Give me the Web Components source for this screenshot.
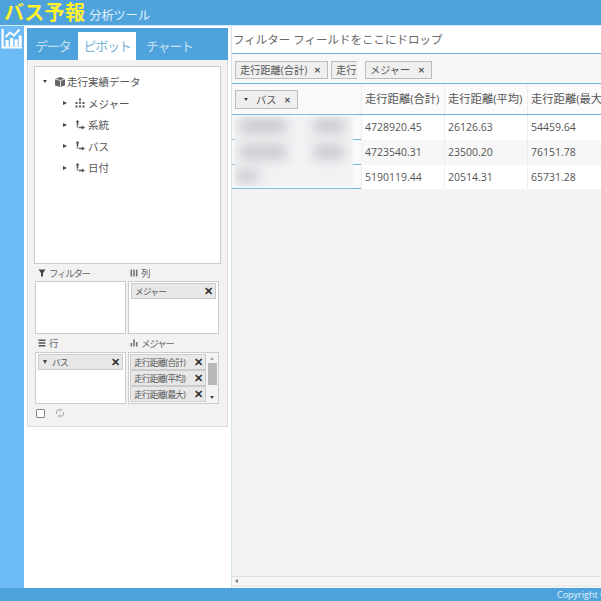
<!DOCTYPE html>
<html>
<head>
<meta charset="utf-8">
<style>
html, body { margin: 0; height: 100%; overflow: hidden; }
body { font-family: "Open Sans", "Noto Sans CJK JP", sans-serif; }
</style>
</head>
<body>
<app-shell></app-shell>
<script>
const FONT = '"Open Sans", "Noto Sans CJK JP", sans-serif';

class AppShell extends HTMLElement {
    constructor() {
        super();
        this.attachShadow({ mode: 'open' }).innerHTML = `
<style>
:host { display: grid; grid-template-rows: 25px 1fr 13px; width: 601px; height: 601px; overflow: hidden; font-family: ${FONT}; color: #555; }
.body { display: grid; grid-template-columns: 24px 207px 1fr; min-height: 0; border-top: 1px solid #d5ebf8; }
.rail { background: #6cbaf6; padding: 2px 0 0 1px; }
.side { background: #fff; padding: 2px 3px 0 3px; }
</style>
<app-header></app-header>
<div class="body">
  <div class="rail">
    <svg width="21" height="21" viewBox="0 0 21 21" fill="#fff">
      <path d="M0.500 1h2.200v17.500H21V20.500H0.500z"/>
      <path d="M4.500 12h3.200v6.500H4.500zM9 10h3.200v8.500H9zM13.500 11.500h3.200v7h-3.200zM17.700 7.500h3v11h-3z"/>
      <path d="M4.500 9l4.500-4.500 4 3 5.500-6" fill="none" stroke="#fff" stroke-width="2"/>
    </svg>
  </div>
  <div class="side"><pivot-panel></pivot-panel></div>
  <pivot-view></pivot-view>
</div>
<app-footer></app-footer>`;
    }
}

class AppHeader extends HTMLElement {
    constructor() {
        super();
        this.attachShadow({ mode: 'open' }).innerHTML = `
<style>
:host { display: flex; align-items: baseline; background: #4fa3dc; padding-left: 4px; height: 25px; overflow: hidden; }
b { font-size: 20px; line-height: 25px; letter-spacing: 0.300px; color: #fff12e; font-weight: 700; }
span { font-size: 12.200px; color: #e6f3fb; margin-left: 4px; }
</style>
<b>バス予報</b><span>分析ツール</span>`;
    }
}

class AppFooter extends HTMLElement {
    constructor() {
        super();
        this.attachShadow({ mode: 'open' }).innerHTML = `
<style>
:host { display: flex; justify-content: flex-end; background: #4fa3dc; color: #e6f3fb; font-size: 9px; line-height: 13px; overflow: hidden; }
span { width: 44px; white-space: nowrap; }
</style>
<span>Copyright ©</span>`;
    }
}

class PivotPanel extends HTMLElement {
    constructor() {
        super();
        this.attachShadow({ mode: 'open' }).innerHTML = `
<style>
:host { display: block; width: 201px; height: 399px; background: #f2f2f2; border: 1px solid #ddd; border-top: 0; box-sizing: border-box; font-size: 12px; }
.tabs { display: flex; height: 32px; margin: 0 -1px; background: #4fa3dc; padding-top: 4px; box-sizing: border-box; color: #c4e0f3; font-size: 13px; letter-spacing: -1.300px; }
.tabs span { line-height: 28px; white-space: nowrap; }
.tabs span:first-child { width: 43px; padding-left: 8px; }
.tabs .on { width: 58px; text-align: center; background: #fff; color: #7ab3dc; }
.tabs span:last-child { padding-left: 10px; }
.tree { margin: 6px 6px 0; height: 198px; background: #fff; border: 1px solid #ccc; box-sizing: border-box; padding: 4px 0 0 8px; }
.zones { display: grid; grid-template-columns: 91px 91px; grid-template-rows: 70px 70px; column-gap: 2px; margin: 0 0 0 7px; }
.tools { display: flex; align-items: center; gap: 10px; margin: 4px 0 0 8px; }
.check { width: 9px; height: 9px; background: #fff; border: 1px solid #888; border-radius: 1px; box-sizing: border-box; }
</style>
<div class="tabs"><span>データ</span><span class="on">ピボット</span><span>チャート</span></div>
<div class="tree">
  <tree-node open icon="cube">走行実績データ</tree-node>
  <tree-node indent icon="measure">メジャー</tree-node>
  <tree-node indent icon="dim">系統</tree-node>
  <tree-node indent icon="dim">バス</tree-node>
  <tree-node indent icon="dim">日付</tree-node>
</div>
<div class="zones">
  <drop-zone label="フィルター" icon="filter"></drop-zone>
  <drop-zone label="列" icon="cols"><zone-chip>メジャー</zone-chip></drop-zone>
  <drop-zone label="行" icon="rows" lower><zone-chip caret>バス</zone-chip></drop-zone>
  <drop-zone label="メジャー" icon="bars" lower scroll>
    <zone-chip>走行距離(合計)</zone-chip>
    <zone-chip>走行距離(平均)</zone-chip>
    <zone-chip>走行距離(最大)</zone-chip>
  </drop-zone>
</div>
<div class="tools">
  <span class="check"></span>
  <svg width="10" height="10" viewBox="0 0 10 10" fill="none" stroke="#aaa" stroke-width="1">
    <path d="M1.500 6V3.500A1.500 1.500 0 0 1 3 2h3M5 0.500L6.500 2 5 3.500"/>
    <path d="M8.500 4v2.500A1.500 1.500 0 0 1 7 8H4M5 6.500L3.500 8 5 9.500"/>
  </svg>
</div>`;
    }
}

const TREE_ICONS = {
    cube: '<path d="M0 2l5-2 5 2v6.500l-5 1.500-5-1.500z" fill="#666"/><path d="M5.500 3.500v6.500M0 2l5.500 1.500L10 2" stroke="#fff" stroke-width="0.800" fill="none"/>',
    measure: '<path d="M4 0.500h2v2H4zM0.500 4h2v2h-2zM4 3.800h2v2H4zM7.500 4h2v2h-2zM0.500 7.500h2v2h-2zM4 7.500h2v2H4zM7.500 7.500h2v2h-2z" fill="#555"/>',
    dim: '<path d="M2.500 0L4.500 2.200H3.300v3.300H1.700V2.200H0.500zM1.700 6.300h1.600V7.500H1.700zM4 6.800h3V5.500L10 7.500 7 9.500V8.200H4z" fill="#555"/>'
};

class TreeNode extends HTMLElement {
    constructor() {
        super();
        this.attachShadow({ mode: 'open' });
    }
    connectedCallback() {
        const open = this.hasAttribute('open');
        const indent = this.hasAttribute('indent');
        this.shadowRoot.innerHTML = `
<style>
:host { display: flex; align-items: center; height: 21.500px; padding-left: ${indent ? 20 : 0}px; font-size: 10.500px; color: #555; }
.arrow { width: 0; height: 0; margin-right: 8px; ${open
    ? 'border-left: 2.500px solid transparent; border-right: 2.500px solid transparent; border-top: 3px solid #444;'
    : 'border-top: 2.500px solid transparent; border-bottom: 2.500px solid transparent; border-left: 4px solid #444;'} }
svg { flex: none; margin-right: ${indent ? 3 : 2}px; }
</style>
<span class="arrow"></span>
<svg width="10" height="10" viewBox="0 0 10 10">${TREE_ICONS[this.getAttribute('icon')]}</svg>
<slot></slot>`;
    }
}

const ZONE_ICONS = {
    filter: '<path d="M0.500 1.500h7L5 5v3.500H3V5z" fill="#444"/>',
    cols: '<path d="M0.500 1.500h1.600v7H0.500zM3.200 1.500h1.600v7H3.200zM5.900 1.500h1.600v7H5.900z" fill="#777"/>',
    rows: '<path d="M0.500 1.500h7v1.400h-7zM0.500 4.300h7v1.400h-7zM0.500 7.100h7v1.400h-7z" fill="#555"/>',
    bars: '<path d="M0.500 5h1.600v3.500H0.500zM3.200 1.500h1.600v7H3.200zM5.900 4h1.600v4.500H5.900z" fill="#777"/>'
};

class DropZone extends HTMLElement {
    constructor() {
        super();
        this.attachShadow({ mode: 'open' });
    }
    connectedCallback() {
        const lower = this.hasAttribute('lower');
        const scroll = this.hasAttribute('scroll');
        this.shadowRoot.innerHTML = `
<style>
:host { display: block; font-size: 9.500px; color: #666; letter-spacing: -1.300px; }
.label { display: flex; align-items: center; gap: 3px; height: ${lower ? 18 : 17}px; padding-left: ${scroll || this.getAttribute('icon') === 'cols' ? 2 : 3}px; }
.box { position: relative; height: ${lower ? 52 : 53}px; background: #fff; border: 1px solid #ccc; box-sizing: border-box; padding: 0 2px; overflow: hidden; letter-spacing: 0; }
.scroll { padding: 0 0 0 1px; }
.bar { position: absolute; right: 0; top: 0; bottom: 0; width: 12px; background: #f4f4f4; }
.bar i { position: absolute; left: 2px; top: 10px; width: 9px; height: 22px; background: #b9b9b9; }
.bar u { position: absolute; left: 4px; width: 0; height: 0; border-left: 2.500px solid transparent; border-right: 2.500px solid transparent; }
.bar .up { top: 4px; border-bottom: 3px solid #aaa; }
.bar .down { bottom: 4px; border-top: 3px solid #444; }
.list { padding-top: 1px; }
.scroll .list { margin-right: 12px; }
.scroll .list::after { content: ""; display: block; height: 4px; margin-top: 1px; background: #e4e4e4; }
svg { flex: none; }
</style>
<div class="label"><svg width="8" height="10" viewBox="0 0 8 10">${ZONE_ICONS[this.getAttribute('icon')]}</svg>${this.getAttribute('label')}</div>
<div class="box ${scroll ? 'scroll' : ''}"><div class="list"><slot></slot></div>${scroll ? '<div class="bar"><u class="up"></u><i></i><u class="down"></u></div>' : ''}</div>`;
    }
}

class ZoneChip extends HTMLElement {
    constructor() {
        super();
        this.attachShadow({ mode: 'open' });
    }
    connectedCallback() {
        const caret = this.hasAttribute('caret');
        this.shadowRoot.innerHTML = `
<style>
:host { display: flex; align-items: center; height: 16px; background: #e8e8e8; border: 1px solid #ccc; box-sizing: border-box; padding: 0 2px 0 3px; font-size: 8.600px; letter-spacing: -0.700px; color: #555; }
.c { width: 0; height: 0; margin: 0 5px 0 1px; border-left: 2.500px solid transparent; border-right: 2.500px solid transparent; border-top: 4px solid #444; }
span { flex: 1; white-space: nowrap; }
b { font-size: 11px; line-height: 12px; letter-spacing: 0; color: #333; font-family: "Liberation Sans", sans-serif; }
</style>
${caret ? '<i class="c"></i>' : ''}<span><slot></slot></span><b>✕</b>`;
    }
}

class FieldTag extends HTMLElement {
    constructor() {
        super();
        this.attachShadow({ mode: 'open' });
    }
    connectedCallback() {
        const caret = this.hasAttribute('caret');
        const cut = this.hasAttribute('cut');
        this.shadowRoot.innerHTML = `
<style>
:host { display: inline-flex; align-items: center; flex: none; height: 18px; background: #efefef; border: 1px solid #bbb; box-sizing: border-box; padding: 0 6px 0 4px; font-size: 10.200px; color: #555; white-space: nowrap; overflow: hidden; ${cut ? 'border-right: 0; padding-right: 0;' : ''} }
.c { width: 0; height: 0; margin: 0 8px 0 4px; border-left: 2px solid transparent; border-right: 2px solid transparent; border-top: 3px solid #444; }
b { font-size: 7.500px; margin-left: auto; color: #555; }
</style>
${caret ? '<i class="c"></i>' : ''}<slot></slot>${cut ? '' : '<b>✕</b>'}`;
    }
}

class PivotView extends HTMLElement {
    constructor() {
        super();
        this.attachShadow({ mode: 'open' }).innerHTML = `
<style>
:host { display: flex; flex-direction: column; background: #f3f3f3; border-left: 1px solid #d6e4ee; min-width: 0; overflow: hidden; font-size: 10.500px; color: #555; }
.filter { height: 27px; background: #fff; border-bottom: 1px solid #6fb2de; padding-left: 1px; font-size: 11.500px; line-height: 27px; color: #666; }
.tags { display: flex; height: 27px; padding: 2px 0 0 3px; align-items: center; background: #f7f7f7; border-bottom: 1px solid #6fb2de; }
.tags .gap { width: 8px; flex: none; }
.head { display: flex; height: 30px; border-bottom: 1px solid #6fb2de; font-size: 11.300px; }
.corner { width: 129px; flex: none; background: #fafafa; padding: 5px 0 0 3px; box-sizing: border-box; }
.rows { position: relative; }
.row { display: flex; height: 25px; line-height: 25px; background: #fff; }
.row.alt { background: #f7f7f7; }
.row.last { height: 24px; line-height: 24px; }
.name { width: 129px; flex: none; box-sizing: border-box; background: #fafafa; border-bottom: 1px solid #6fb2de; }
.cell { width: 83px; flex: none; box-sizing: border-box; padding-left: 3px; border-left: 1px solid #eee; white-space: nowrap; }
.head .cell { background: #fbfbfb; line-height: 30px; }
.fill { flex: 1; }
.blur { position: absolute; left: 2px; top: 1px; width: 119px; height: 71px; background: #f1f2f4; filter: blur(1.500px); overflow: hidden; }
.blur i { position: absolute; background: #c6c8cb; filter: blur(6px); }
.hscroll { height: 10px; flex: none; box-sizing: border-box; margin-bottom: 2px; background: #f6f6f6; border-top: 1px solid #e0e0e0; border-bottom: 1px solid #e8e8e8; position: relative; }
.hscroll u { position: absolute; left: 3px; top: 2px; width: 0; height: 0; border-top: 2px solid transparent; border-bottom: 2px solid transparent; border-right: 3px solid #777; }
</style>
<div class="filter">フィルター フィールドをここにドロップ</div>
<div class="tags">
  <field-tag style="width:93px">走行距離(合計)</field-tag>
  <field-tag cut style="width:26px;margin-left:3px">走行距</field-tag>
  <span class="gap"></span>
  <field-tag style="width:67px">メジャー</field-tag>
</div>
<div class="head">
  <div class="corner"><field-tag caret style="width:63px;height:19px">バス</field-tag></div>
  <div class="cell">走行距離(合計)</div><div class="cell">走行距離(平均)</div><div class="cell">走行距離(最大)</div>
</div>
<div class="rows">
  <div class="row">
    <div class="name"></div>
    <div class="cell">4728920.45</div><div class="cell">26126.63</div><div class="cell">54459.64</div><div class="fill"></div>
  </div>
  <div class="row alt">
    <div class="name"></div>
    <div class="cell">4723540.31</div><div class="cell">23500.20</div><div class="cell">76151.78</div><div class="fill"></div>
  </div>
  <div class="row last">
    <div class="name"></div>
    <div class="cell">5190119.44</div><div class="cell">20514.31</div><div class="cell">65731.28</div><div class="fill"></div>
  </div>
  <div class="blur">
    <i style="left:6px;top:3px;width:46px;height:14px"></i>
    <i style="left:80px;top:3px;width:30px;height:14px"></i>
    <i style="left:6px;top:29px;width:46px;height:14px"></i>
    <i style="left:80px;top:29px;width:30px;height:14px"></i>
    <i style="left:2px;top:54px;width:22px;height:12px"></i>
  </div>
</div>
<div class="fill"></div>
<div class="hscroll"><u></u></div>`;
    }
}

customElements.define('app-shell', AppShell);
customElements.define('app-header', AppHeader);
customElements.define('app-footer', AppFooter);
customElements.define('pivot-panel', PivotPanel);
customElements.define('tree-node', TreeNode);
customElements.define('drop-zone', DropZone);
customElements.define('zone-chip', ZoneChip);
customElements.define('field-tag', FieldTag);
customElements.define('pivot-view', PivotView);
</script>
</body>
</html>
